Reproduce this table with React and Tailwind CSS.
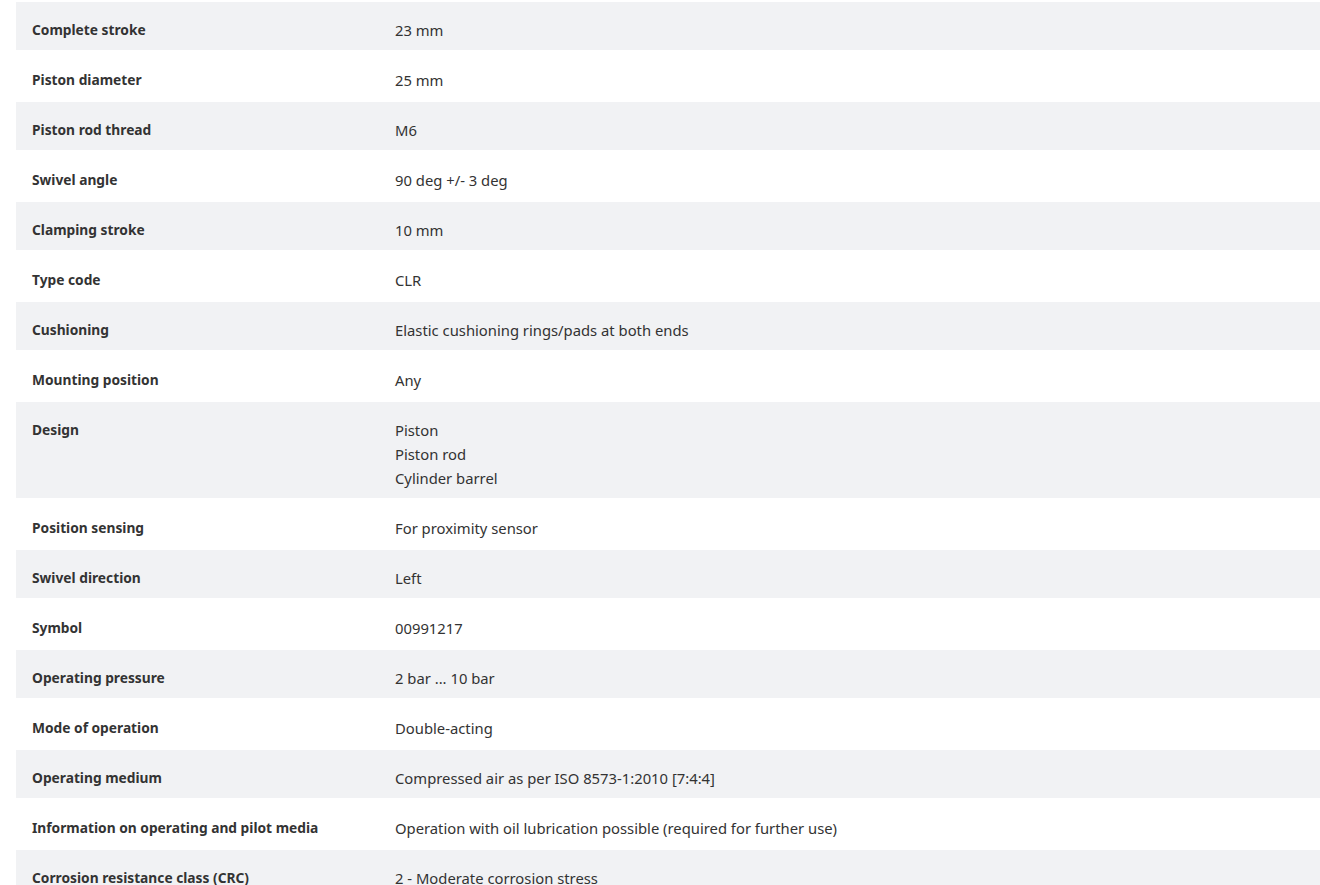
const rows = [
  ["Complete stroke", ["23 mm"]],
  ["Piston diameter", ["25 mm"]],
  ["Piston rod thread", ["M6"]],
  ["Swivel angle", ["90 deg +/- 3 deg"]],
  ["Clamping stroke", ["10 mm"]],
  ["Type code", ["CLR"]],
  ["Cushioning", ["Elastic cushioning rings/pads at both ends"]],
  ["Mounting position", ["Any"]],
  ["Design", ["Piston", "Piston rod", "Cylinder barrel"]],
  ["Position sensing", ["For proximity sensor"]],
  ["Swivel direction", ["Left"]],
  ["Symbol", ["00991217"]],
  ["Operating pressure", ["2 bar ... 10 bar"]],
  ["Mode of operation", ["Double-acting"]],
  ["Operating medium", ["Compressed air as per ISO 8573-1:2010 [7:4:4]"]],
  ["Information on operating and pilot media", ["Operation with oil lubrication possible (required for further use)"]],
  ["Corrosion resistance class (CRC)", ["2 - Moderate corrosion stress"]],
];

export default function App() {
  return (
    <div className="bg-white pl-4 h-[885px] overflow-hidden font-['Noto_Sans',sans-serif] text-[#333333]">
      {rows.map(([label, values], i) => (
        <div
          key={label}
          className={`flex border-t-2 border-white ${i % 2 === 0 ? "bg-[#f1f2f4]" : "bg-white"}`}
        >
          <div className="w-[379px] shrink-0 pl-4 pt-4 pb-2 leading-6 text-[13.75px] font-bold">{label}</div>
          <div className="pt-4 pb-2 leading-6 text-[14.8px]">
            {values.map((v) => (
              <div key={v}>{v}</div>
            ))}
          </div>
        </div>
      ))}
    </div>
  );
}
